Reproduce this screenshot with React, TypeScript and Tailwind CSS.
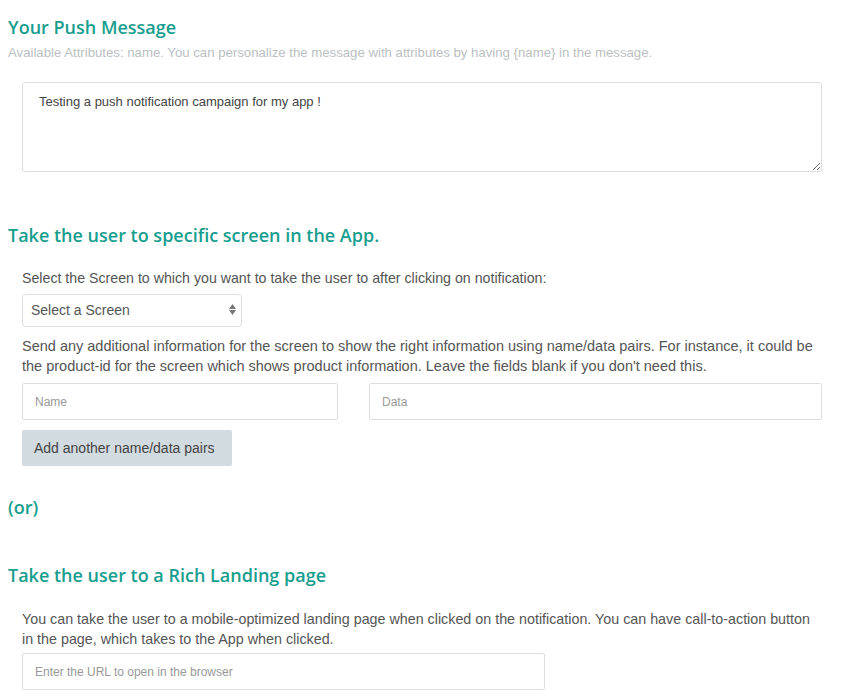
import { useState } from "react"

const Heading = ({ children, className = "" }: { children: React.ReactNode; className?: string }) => (
  <h2 className={`text-[18px] leading-[24px] font-semibold text-[#179e8e] font-['Open_Sans',sans-serif] ${className}`}>
    {children}
  </h2>
)

export default function App() {
  const [message, setMessage] = useState("Testing a push notification campaign for my app !")
  const [pairs, setPairs] = useState(1)

  return (
    <div className="w-[847px] min-h-[700px] bg-white font-['Liberation_Sans',Arial,sans-serif] text-[#555]">
      <div className="pl-2 pt-[15px]">
        <Heading>Your Push Message</Heading>
        <p className="mt-[7px] text-[13.2px] leading-[14px] text-[#babfc2]">
          Available Attributes: name. You can personalize the message with attributes by having {"{name}"} in the message.
        </p>
      </div>

      <div className="pl-[22px] pr-[25px] mt-[22px]">
        <textarea
          value={message}
          onChange={(e) => setMessage(e.target.value)}
          className="block w-full h-[90px] border border-[#dcdfe1] rounded-[3px] px-4 py-[10px] text-[13px] leading-[18px] text-[#444] outline-none"
        />
      </div>

      <div className="pl-2 mt-[51px]">
        <Heading>Take the user to specific screen in the App.</Heading>
      </div>

      <div className="pl-[22px] pr-[25px]">
        <p className="mt-[21px] text-[14.2px] leading-[20px]">
          Select the Screen to which you want to take the user to after clicking on notification:
        </p>
        <div className="mt-[6px] relative w-[220px] h-[33px] border border-[#dcdfe1] rounded-[4px] flex items-center px-2 text-[14px] text-[#555]">
          Select a Screen
          <span className="absolute right-[5px] top-[9px] flex flex-col items-center gap-[1px]">
            <svg width="7" height="5" viewBox="0 0 7 5"><path d="M3.5 0 L7 5 L0 5 Z" fill="#777" /></svg>
            <svg width="7" height="5" viewBox="0 0 7 5"><path d="M0 0 L7 0 L3.5 5 Z" fill="#777" /></svg>
          </span>
        </div>
        <p className="mt-[9px] text-[14.5px] leading-[20px]">
          Send any additional information for the screen to show the right information using name/data pairs. For instance, it could be the product-id for the screen which shows product information. Leave the fields blank if you don't need this.
        </p>
        {Array.from({ length: pairs }).map((_, i) => (
          <div key={i} className="mt-[7px] flex gap-[31px]">
            <input
              placeholder="Name"
              className="w-[316px] h-[37px] border border-[#dcdfe1] rounded-[2px] px-3 text-[12px] text-[#444] placeholder-[#999] outline-none"
            />
            <input
              placeholder="Data"
              className="flex-1 h-[37px] border border-[#dcdfe1] rounded-[2px] px-3 text-[12px] text-[#444] placeholder-[#999] outline-none"
            />
          </div>
        ))}
        <button
          onClick={() => setPairs(pairs + 1)}
          className="mt-[10px] h-[36px] w-[210px] bg-[#d2dbe0] rounded-[2px] text-left pl-3 text-[14px] text-[#444]"
        >
          Add another name/data pairs
        </button>
      </div>

      <div className="pl-2 mt-[29px]">
        <Heading>(or)</Heading>
      </div>

      <div className="pl-2 mt-[44px]">
        <Heading>Take the user to a Rich Landing page</Heading>
      </div>

      <div className="pl-[22px] pr-[25px]">
        <p className="mt-[22px] text-[14.3px] leading-[20px]">
          You can take the user to a mobile-optimized landing page when clicked on the notification. You can have call-to-action button in the page, which takes to the App when clicked.
        </p>
        <input
          placeholder="Enter the URL to open in the browser"
          className="mt-[4px] w-[523px] h-[37px] border border-[#dcdfe1] rounded-[2px] px-3 text-[12px] text-[#444] placeholder-[#999] outline-none"
        />
      </div>
    </div>
  )
}
